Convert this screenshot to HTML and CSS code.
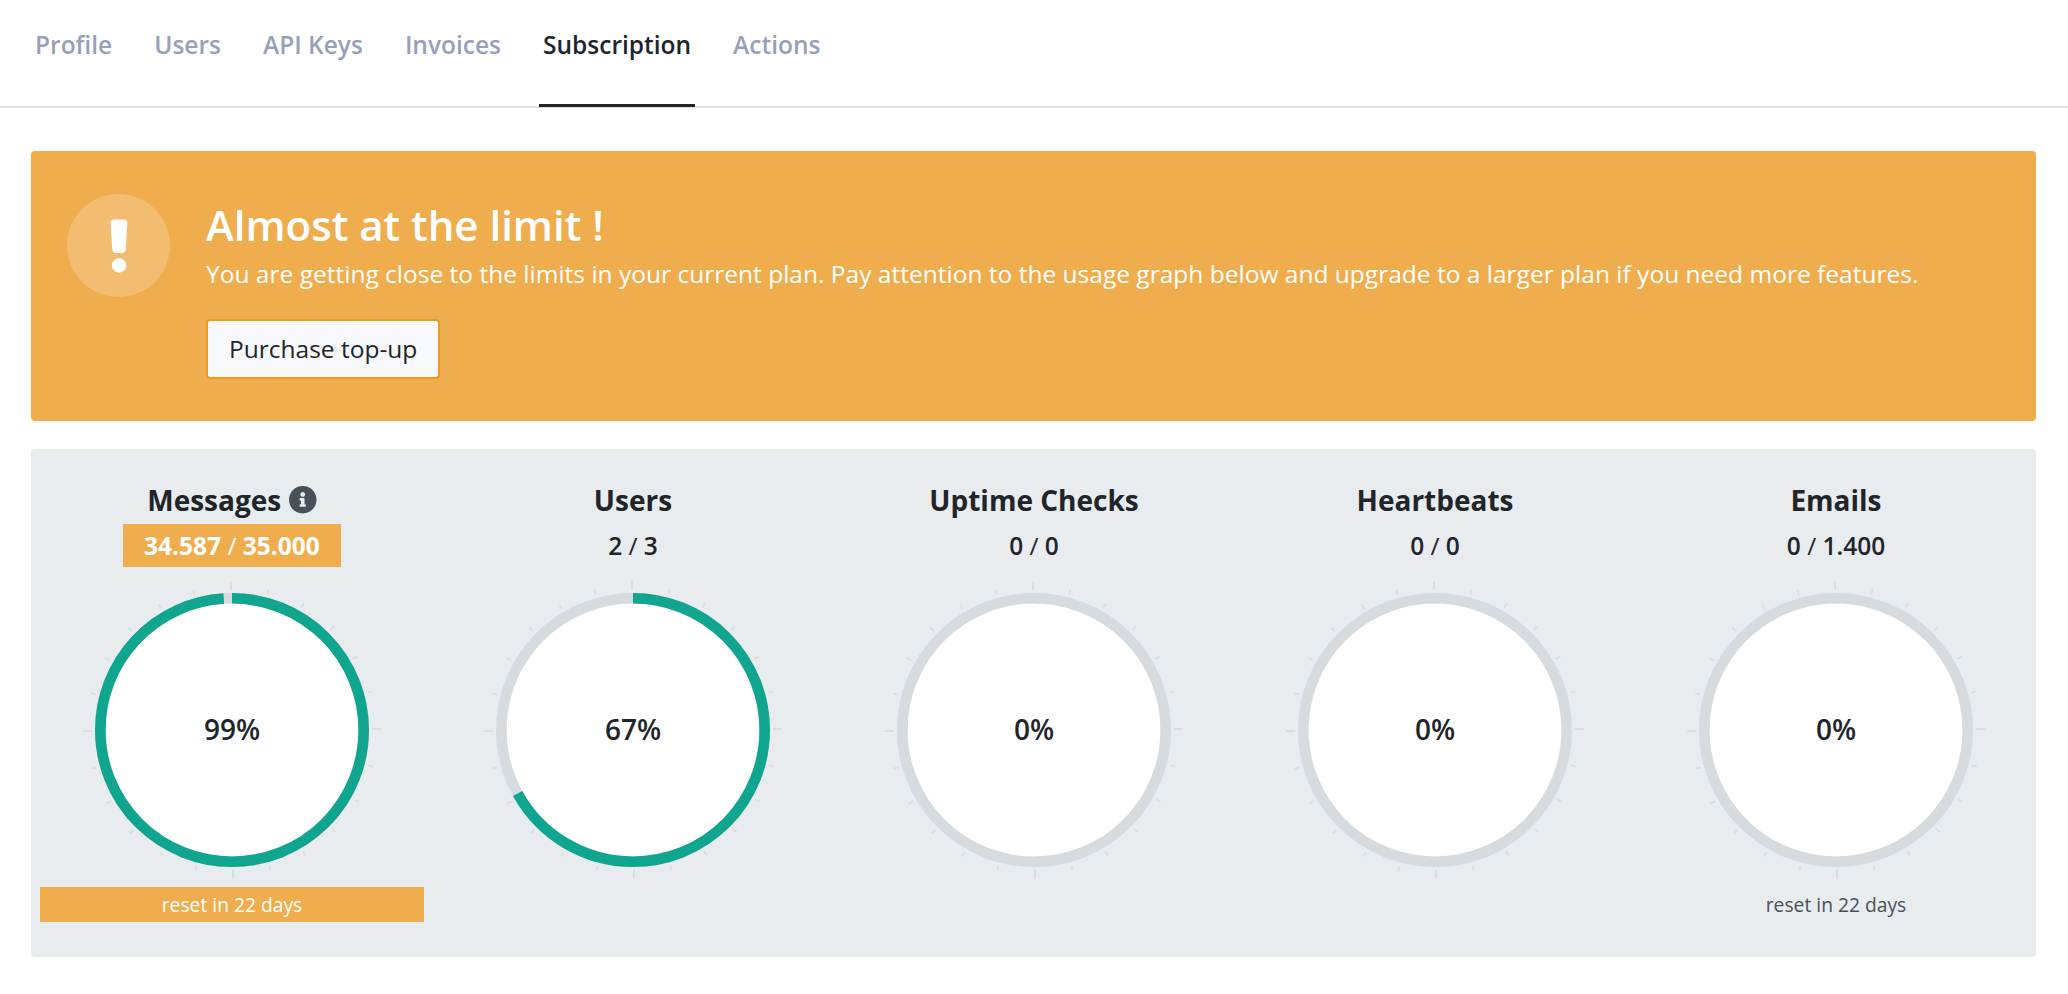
FILE: index.html
```html
<!DOCTYPE html>
<html lang="en">
<head>
<meta charset="utf-8">
<title>Subscription</title>
<link rel="stylesheet" href="styles.css">
</head>
<body>
<nav class="tabs">
  <a class="tab">Profile</a>
  <a class="tab">Users</a>
  <a class="tab">API Keys</a>
  <a class="tab">Invoices</a>
  <a class="tab active">Subscription</a>
  <a class="tab">Actions</a>
</nav>
<main class="content">
  <section class="alert">
    <div class="alert-icon">
      <svg width="18" height="54" viewBox="0 0 18 54"><path fill="#fff" d="M4 .5h10q3.600 0 3.400 3.500l-1.700 26q-.3 4-4 4H6.300q-3.700 0-4-4L.6 4Q.4.500 4 .500z"/><circle cx="9" cy="46.500" r="7.200" fill="#fff"/></svg>
    </div>
    <div class="alert-body">
      <h2 class="alert-title">Almost at the limit !</h2>
      <p class="alert-text">You are getting close to the limits in your current plan. Pay attention to the usage graph below and upgrade to a larger plan if you need more features.</p>
      <button class="btn">Purchase top-up</button>
    </div>
  </section>
  <section class="usage" id="usage"></section>
</main>
<script src="usage.js"></script>
</body>
</html>
```

FILE: styles.css
```css
* { box-sizing: border-box; }
body {
  margin: 0;
  background: #fff;
  color: #212529;
  font-family: "Open Sans", "Noto Sans", sans-serif;
}
.tabs {
  display: flex;
  gap: 34px;
  height: 108px;
  padding: 0 31px;
  border-bottom: 2px solid #dee2e6;
}
.tab {
  height: 107px;
  padding: 25px 4px 0;
  border-bottom: 3px solid transparent;
  color: #989fbb;
  font-size: 24.5px;
  font-weight: 600;
  line-height: 40px;
  white-space: nowrap;
}
.tab.active { color: #212529; border-bottom-color: #212529; }
.content { padding: 43px 32px 0 31px; }
.alert {
  display: flex;
  gap: 36px;
  height: 270px;
  padding: 43px 36px 0;
  border-radius: 4px;
  background: #f0ad4e;
  color: #fff;
}
.alert-icon {
  display: flex;
  align-items: center;
  justify-content: center;
  flex: none;
  width: 103px;
  height: 103px;
  border-radius: 50%;
  background: rgba(255, 255, 255, .2);
}
.alert-body { padding-top: 6px; }
.alert-title { margin: 0; font-size: 42px; font-weight: 600; line-height: 50px; }
.alert-text { margin: 6px 0 27px; font-size: 24.52px; line-height: 36px; white-space: nowrap; }
.btn {
  height: 60px;
  padding: 0 21px 1px;
  border: 2px solid #ee9a1d;
  border-radius: 4px;
  background: #f8f9fc;
  color: #212529;
  font: 400 24.5px "Open Sans", "Noto Sans", sans-serif;
}
.usage {
  display: grid;
  grid-template-columns: repeat(5, 1fr);
  height: 508px;
  margin-top: 28px;
  padding-top: 32px;
  border-radius: 4px;
  background: #e8ecef;
}
.metric {
  display: flex;
  flex-direction: column;
  align-items: center;
  padding: 0 8px 0 9px;
}
.metric-title {
  display: flex;
  align-items: center;
  gap: 8px;
  margin: 0 0 5px;
  font-size: 28px;
  font-weight: 700;
  line-height: 38px;
}
.metric-count { padding: 0 21px; font-size: 24.5px; font-weight: 600; line-height: 43px; }
.slash { font-weight: 400; }
.gauge { display: grid; place-items: center; margin: 14px 0 8px; }
.gauge > * { grid-area: 1 / 1; }
.gauge-value { padding-bottom: 2px; font-size: 28px; font-weight: 600; line-height: 38px; }
.metric-reset {
  align-self: stretch;
  color: #495057;
  font-size: 19.25px;
  line-height: 35px;
  text-align: center;
}
.metric.warn .metric-count { background: #f0ad4e; color: #fff; font-weight: 700; }
.metric.warn .metric-reset { background: #f0ad4e; color: #fff; }
```

FILE: usage.js
```js
const metrics = [
  { title: 'Messages', used: '34.587', limit: '35.000', pct: 99, reset: 'reset in 22 days', warn: true, info: true },
  { title: 'Users', used: '2', limit: '3', pct: 67 },
  { title: 'Uptime Checks', used: '0', limit: '0', pct: 0 },
  { title: 'Heartbeats', used: '0', limit: '0', pct: 0 },
  { title: 'Emails', used: '0', limit: '1.400', pct: 0, reset: 'reset in 22 days' },
];

const infoIcon = '<svg width="27.500" height="27.500" viewBox="8 8 496 496"><path fill="#495057" d="M256 8C119.043 8 8 119.083 8 256c0 136.997 111.043 248 248 248s248-111.003 248-248C504 119.083 392.957 8 256 8zm0 110c23.196 0 42 18.804 42 42s-18.804 42-42 42-42-18.804-42-42 18.804-42 42-42zm56 254c0 6.627-5.373 12-12 12h-88c-6.627 0-12-5.373-12-12v-24c0-6.627 5.373-12 12-12h12v-64h-12c-6.627 0-12-5.373-12-12v-24c0-6.627 5.373-12 12-12h64c6.627 0 12 5.373 12 12v100h12c6.627 0 12 5.373 12 12v24z"/></svg>';

// Ring with a tick every 15 degrees, longer on the quarters.
function gauge(pct) {
  let ticks = '';
  for (let a = 0; a < 360; a += 15) {
    const long = a % 90 === 0;
    ticks += `<rect x="-2" y="${long ? -149 : -145.500}" width="2" height="${long ? 9 : 5}" transform="rotate(${a})"/>`;
  }
  const arc = pct ? `<circle r="131.700" fill="none" stroke="#0fa58f" stroke-width="10.600" pathLength="100" stroke-dasharray="${pct} 100" transform="rotate(-90)"/>` : '';
  return `<svg width="298" height="298" viewBox="-149 -149 298 298"><g fill="#dadee1">${ticks}</g><circle r="131.700" fill="#fff" stroke="#d6dbdf" stroke-width="10.600"/>${arc}</svg>`;
}

document.getElementById('usage').innerHTML = metrics.map(m => `
  <article class="metric${m.warn ? ' warn' : ''}">
    <h3 class="metric-title">${m.title}${m.info ? infoIcon : ''}</h3>
    <div class="metric-count">${m.used} <span class="slash">/</span> ${m.limit}</div>
    <div class="gauge">${gauge(m.pct)}<span class="gauge-value">${m.pct}%</span></div>
    ${m.reset ? `<div class="metric-reset">${m.reset}</div>` : ''}
  </article>`).join('');
```
